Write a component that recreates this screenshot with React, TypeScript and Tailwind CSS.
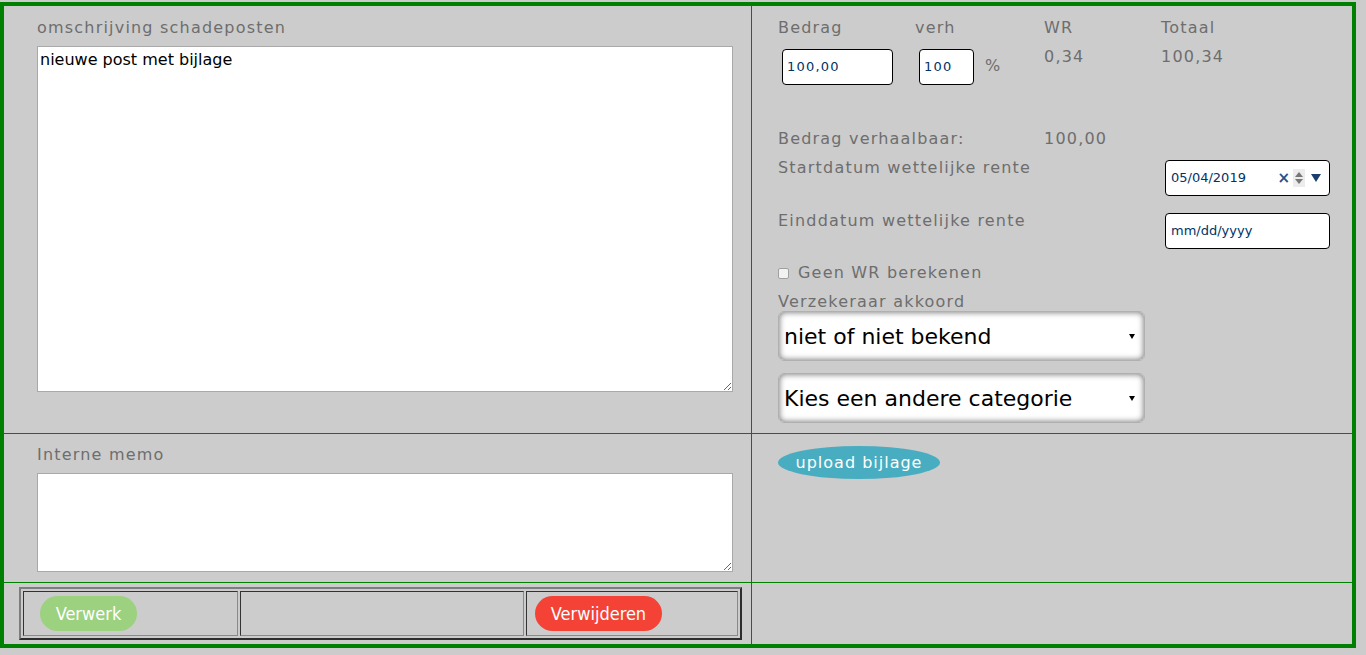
import React from "react";

const labelFont =
  "font-['DejaVu_Sans',Verdana,sans-serif] text-[16px] tracking-[1.2px] text-[#6e6e6e]";
const labelCls = `${labelFont} leading-[20px]`;
const fieldText = "font-['DejaVu_Sans',Verdana,sans-serif] text-[13px] text-[#003366]";
const btnText =
  "font-['DejaVu_Sans_Condensed','DejaVu_Sans',sans-serif] font-stretch-condensed text-[18px] text-white";

function SmallInput({ value, width }: { value: string; width: string }) {
  return (
    <div
      className={`ml-[4px] mt-[2px] flex h-[36px] items-center rounded-[4px] border border-black bg-white pl-[4px] ${width} ${fieldText}`}
    >
      {value}
    </div>
  );
}

function DateField({ value }: { value?: string }) {
  return (
    <div
      className={`mt-[2px] flex h-[36px] w-[165px] items-center rounded-[4px] border border-black bg-white pl-[5px] pr-[8px] ${fieldText}`}
    >
      <span className="flex-1">{value ?? "mm/dd/yyyy"}</span>
      {value && (
        <>
          <span className="mr-[3px] text-[15px] font-bold leading-none text-[#25508a]">×</span>
          <span className="mr-[6px] flex h-[18px] w-[12px] flex-col items-center justify-center gap-[2px] bg-[#ececec]">
            <span className="h-0 w-0 border-x-[4px] border-b-[5px] border-x-transparent border-b-[#777]" />
            <span className="h-0 w-0 border-x-[4px] border-t-[5px] border-x-transparent border-t-[#777]" />
          </span>
          <span className="h-0 w-0 border-x-[5px] border-t-[8px] border-x-transparent border-t-[#1d3d6d]" />
        </>
      )}
    </div>
  );
}

function FakeSelect({ text, className = "" }: { text: string; className?: string }) {
  return (
    <div
      className={`flex h-[50px] w-[367px] items-center rounded-[6px] border border-[#b0b0b0] bg-white pl-[5px] pr-[9px] shadow-[inset_0_0_6px_rgba(0,0,0,0.6)] ${className}`}
    >
      <span className="flex-1 font-['DejaVu_Sans',Verdana,sans-serif] text-[22px] text-black">{text}</span>
      <span className="h-0 w-0 border-x-[3px] border-t-[5px] border-x-transparent border-t-black" />
    </div>
  );
}

export default function App() {
  return (
    <div className="min-h-screen bg-[#cccccc] pt-[2px]">
      <div className="grid w-[1356px] grid-cols-[747px_600px] grid-rows-[427px_148px_61px] gap-px border-4 border-[#008000] bg-[#008000]">
        {/* omschrijving */}
        <div className="bg-[#cccccc] pl-[33px] pt-[12px]">
          <div className={labelCls}>omschrijving schadeposten</div>
          <textarea
            readOnly
            defaultValue="nieuwe post met bijlage"
            className="mt-[8px] block h-[346px] w-[696px] border border-[#a9a9a9] bg-white px-[2px] py-[4px] font-['DejaVu_Sans',Verdana,sans-serif] text-[16px] leading-[18px] text-black outline-none"
          />
        </div>

        {/* bedragen */}
        <div className="bg-[#cccccc] pl-[26px] pr-[22px] pt-[12px]">
          <div className={`flex ${labelCls}`}>
            <div className="w-[137px]">Bedrag</div>
            <div className="w-[129px]">verh</div>
            <div className="w-[117px]">WR</div>
            <div>Totaal</div>
          </div>
          <div className={`mt-[9px] flex items-start ${labelCls}`}>
            <div className="w-[137px]">
              <SmallInput value="100,00" width="w-[111px]" />
            </div>
            <div className="flex w-[129px] items-start">
              <SmallInput value="100" width="w-[55px]" />
              <span className="ml-[11px] mt-[9px]">%</span>
            </div>
            <div className="w-[117px]">0,34</div>
            <div>100,34</div>
          </div>

          <div className={`mt-[44px] flex ${labelCls}`}>
            <div className="w-[266px]">Bedrag verhaalbaar:</div>
            <div>100,00</div>
          </div>

          <div className="mt-[9px] flex items-start justify-between">
            <div className={labelCls}>Startdatum wettelijke rente</div>
            <DateField value="05/04/2019" />
          </div>
          <div className="mt-[15px] flex items-start justify-between">
            <div className={labelCls}>Einddatum wettelijke rente</div>
            <DateField />
          </div>

          <div className={`mt-[14px] flex items-center ${labelCls}`}>
            <span className="mr-[9px] h-[11px] w-[11px] rounded-[2px] border border-[#a0a0a0] bg-[#f2f2f2]" />
            Geen WR berekenen
          </div>
          <div className={`mt-[10px] leading-[18px] ${labelFont}`}>Verzekeraar akkoord</div>
          <FakeSelect text="niet of niet bekend" />
          <FakeSelect text="Kies een andere categorie" className="mt-[12px]" />
        </div>

        {/* memo */}
        <div className="bg-[#cccccc] pl-[33px] pt-[11px]">
          <div className={labelCls}>Interne memo</div>
          <textarea
            readOnly
            className="mt-[8px] block h-[99px] w-[696px] border border-[#a9a9a9] bg-white outline-none"
          />
        </div>

        {/* bijlage */}
        <div className="bg-[#cccccc] pl-[26px] pt-[12px]">
          <button className="flex h-[33px] w-[162px] items-center justify-center rounded-[50%] bg-[#48adc0] font-['DejaVu_Sans',Verdana,sans-serif] text-[16px] tracking-[1px] text-white">
            upload bijlage
          </button>
        </div>

        {/* acties */}
        <div className="bg-[#cccccc] pl-[15px] pt-[4px]">
          <div className="flex h-[53px] w-[723px] gap-[2px] border-2 border-b-[#2e2e2e] border-l-[#7d7d7d] border-r-[#2e2e2e] border-t-[#7d7d7d] p-[2px]">
            <div className="w-[215px] border border-b-[#8a8a8a] border-l-[#333] border-r-[#8a8a8a] border-t-[#333] pl-[16px] pt-[4px]">
              <button className={`h-[35px] w-[97px] rounded-full bg-[#9bd17f] ${btnText}`}>Verwerk</button>
            </div>
            <div className="w-[284px] border border-b-[#8a8a8a] border-l-[#333] border-r-[#8a8a8a] border-t-[#333]" />
            <div className="flex-1 border border-b-[#8a8a8a] border-l-[#333] border-r-[#8a8a8a] border-t-[#333] pl-[8px] pt-[4px]">
              <button className={`h-[35px] w-[127px] rounded-full bg-[#f44336] ${btnText}`}>Verwijderen</button>
            </div>
          </div>
        </div>
        <div className="bg-[#cccccc]" />
      </div>
    </div>
  );
}
